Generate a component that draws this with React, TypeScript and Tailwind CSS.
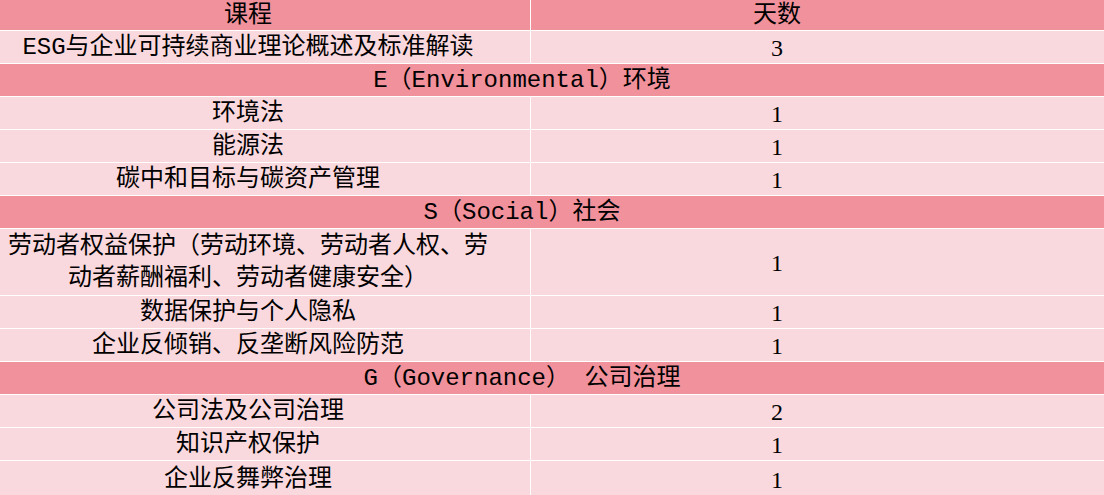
const dark = 'bg-[#f0919b]'
const light = 'bg-[#fad9de]'

type Row =
  | { kind: 'head'; left: string; right: string }
  | { kind: 'item'; left: string; right: string; h?: string }
  | { kind: 'section'; title: string }

const rows: Row[] = [
  { kind: 'head', left: '课程', right: '天数' },
  { kind: 'item', left: 'ESG与企业可持续商业理论概述及标准解读', right: '3' },
  { kind: 'section', title: 'E（Environmental）环境' },
  { kind: 'item', left: '环境法', right: '1' },
  { kind: 'item', left: '能源法', right: '1' },
  { kind: 'item', left: '碳中和目标与碳资产管理', right: '1' },
  { kind: 'section', title: 'S（Social）社会' },
  {
    kind: 'item',
    left: '劳动者权益保护（劳动环境、劳动者人权、劳动者薪酬福利、劳动者健康安全）',
    right: '1',
    h: 'h-[66px]',
  },
  { kind: 'item', left: '数据保护与个人隐私', right: '1' },
  { kind: 'item', left: '企业反倾销、反垄断风险防范', right: '1' },
  { kind: 'section', title: 'G（Governance） 公司治理' },
  { kind: 'item', left: '公司法及公司治理', right: '2' },
  { kind: 'item', left: '知识产权保护', right: '1' },
  { kind: 'item', left: '企业反舞弊治理', right: '1', h: 'h-[35px]' },
]

/** 课程安排表：左列课程，右列天数，分节标题跨两列 */
export default function App() {
  return (
    <div
      className="h-[495px] w-[1104px] overflow-hidden bg-white text-[24px] leading-[32px] text-black"
      style={{ fontFamily: '"Liberation Mono", "Noto Sans CJK SC", monospace' }}
    >
      <div className="grid grid-cols-[530px_1fr] gap-px bg-white">
        {rows.map((r, i) => {
          if (r.kind === 'section') {
            return (
              <div
                key={i}
                className={`col-span-2 flex h-[32px] items-center justify-center pr-[60px] pt-[2px] ${dark}`}
              >
                <span className="whitespace-pre">{r.title}</span>
              </div>
            )
          }
          const bg = r.kind === 'head' ? dark : light
          const h = r.kind === 'head' ? 'h-[30px]' : r.kind === 'item' && r.h ? r.h : 'h-[32px]'
          return (
            <Cells key={i} bg={bg} h={h} left={r.left} right={r.right} />
          )
        })}
      </div>
    </div>
  )
}

function Cells({
  bg,
  h,
  left,
  right,
}: {
  bg: string
  h: string
  left: string
  right: string
}) {
  const isNum = /^\d+$/.test(right)
  return (
    <>
      <div className={`flex items-center justify-center pr-[34px] pt-[2px] text-center ${h} ${bg}`}>
        <span>{left}</span>
      </div>
      <div className={`flex items-center justify-center pr-[81px] pt-[2px] ${h} ${bg}`}>
        <span
          style={
            isNum
              ? { fontFamily: '"Liberation Serif", "Noto Sans CJK SC", serif' }
              : undefined
          }
        >
          {right}
        </span>
      </div>
    </>
  )
}
